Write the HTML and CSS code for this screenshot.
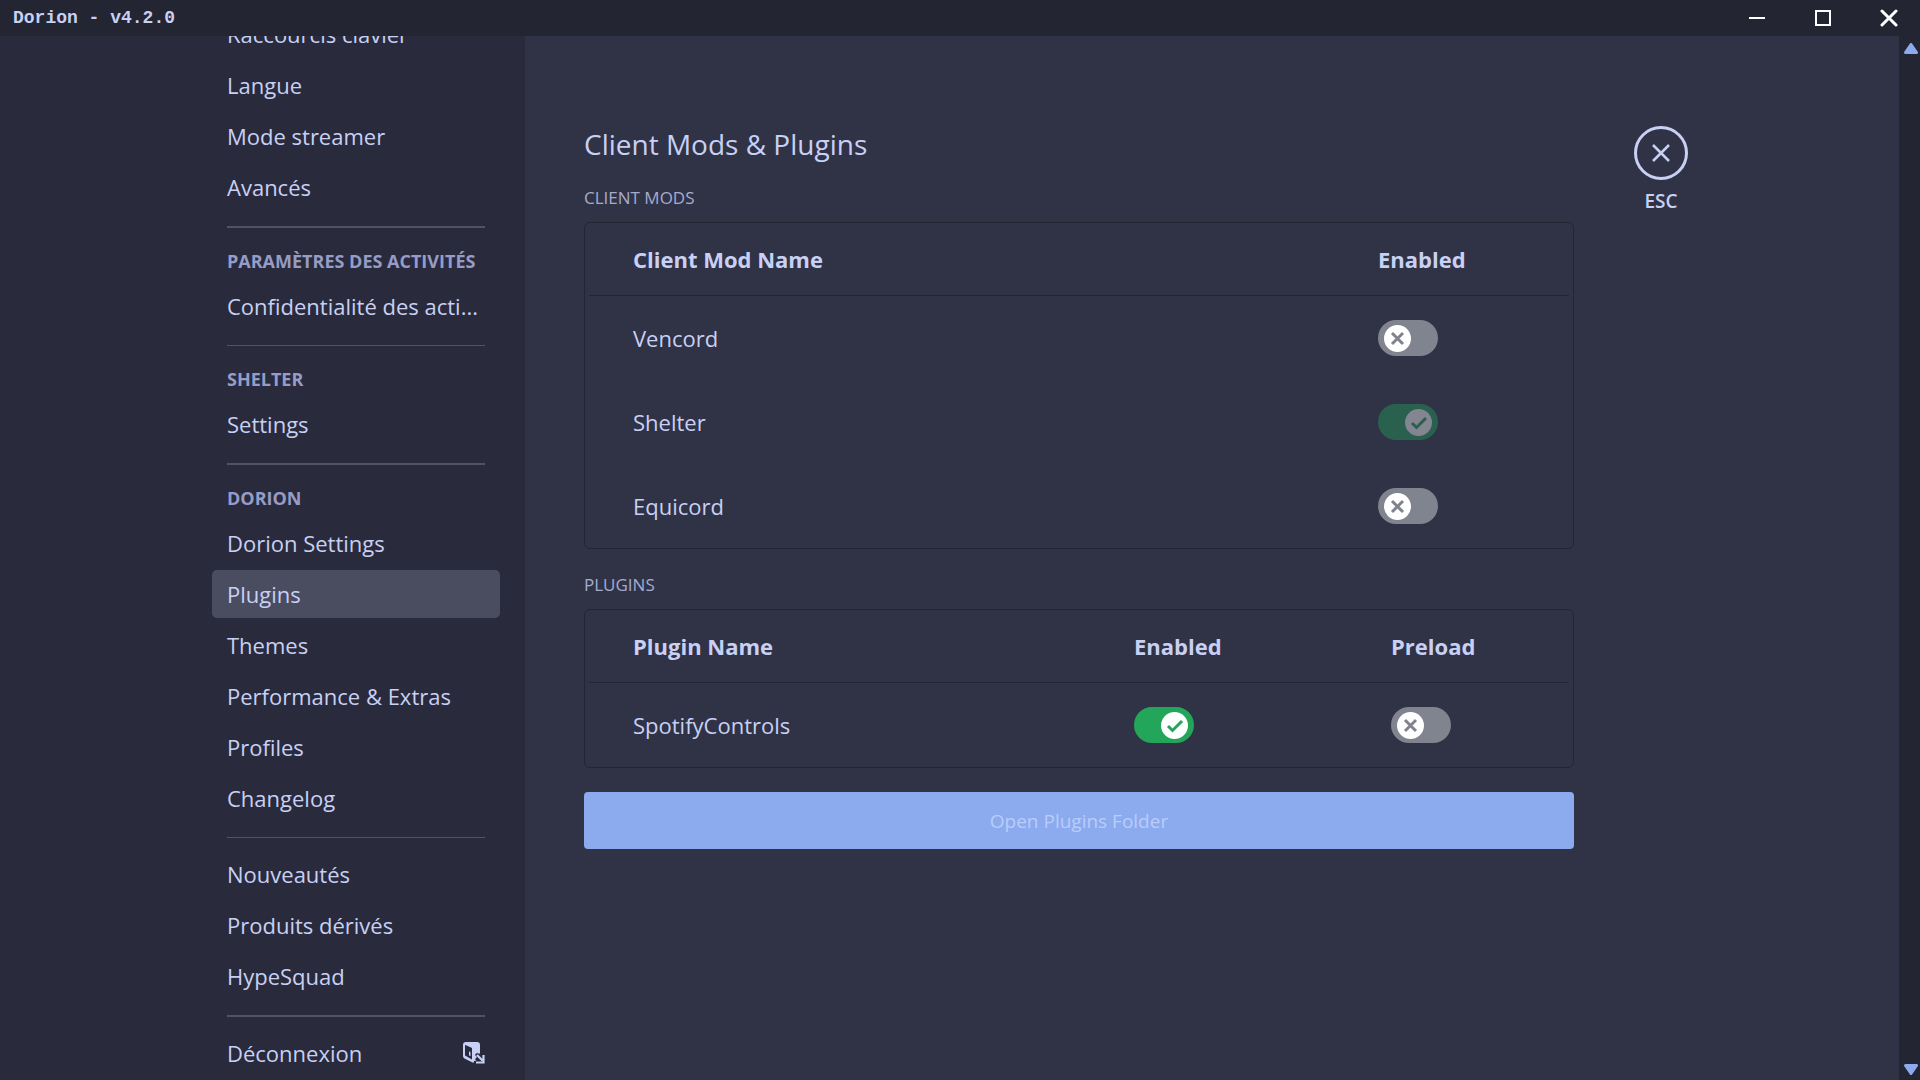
FILE: index.html
```html
<!DOCTYPE html>
<html lang="fr">
<head>
<meta charset="utf-8">
<meta name="viewport" content="width=device-width, initial-scale=1">
<title>Dorion - v4.2.0</title>
<link rel="stylesheet" href="styles.css">
</head>
<body>
<svg class="sprite" aria-hidden="true">
  <symbol id="knob-off" viewBox="0 0 27 27">
    <circle cx="13.5" cy="13.5" r="13.5" fill="#fff"/>
    <path d="M8 8l11 11M19 8L8 19" fill="none" stroke="currentColor" stroke-width="3"/>
  </symbol>
  <symbol id="knob-on" viewBox="0 0 27 27">
    <circle cx="13.5" cy="13.5" r="13.5" fill="#fff"/>
    <path d="M7 14l4.500 4.500L21 9" fill="none" stroke="currentColor" stroke-width="3"/>
  </symbol>
</svg>

<header class="titlebar">
  <span class="titlebar-name">Dorion - v4.2.0</span>
  <div class="window-controls">
    <button type="button" aria-label="Minimize"><svg width="18" height="18" viewBox="0 0 18 18"><path d="M1 9h16" stroke="currentColor" stroke-width="2"/></svg></button>
    <button type="button" aria-label="Maximize"><svg width="18" height="18" viewBox="0 0 18 18"><rect x="2" y="2" width="14" height="14" fill="none" stroke="currentColor" stroke-width="2"/></svg></button>
    <button type="button" aria-label="Close"><svg width="18" height="18" viewBox="0 0 18 18"><path d="M2 2l14 14M16 2L2 16" stroke="currentColor" stroke-width="3" stroke-linecap="round"/></svg></button>
  </div>
</header>

<div class="app">
  <aside class="sidebar">
    <nav class="nav">
      <a class="nav-item" href="#">Raccourcis clavier</a>
      <a class="nav-item" href="#">Langue</a>
      <a class="nav-item" href="#">Mode streamer</a>
      <a class="nav-item" href="#">Avancés</a>
      <hr class="nav-rule">
      <h2 class="nav-heading">Paramètres des activités</h2>
      <a class="nav-item" href="#">Confidentialité des acti...</a>
      <hr class="nav-rule thin">
      <h2 class="nav-heading">Shelter</h2>
      <a class="nav-item" href="#">Settings</a>
      <hr class="nav-rule">
      <h2 class="nav-heading">Dorion</h2>
      <a class="nav-item" href="#">Dorion Settings</a>
      <a class="nav-item selected" href="#" aria-current="page">Plugins</a>
      <a class="nav-item" href="#">Themes</a>
      <a class="nav-item" href="#">Performance &amp; Extras</a>
      <a class="nav-item" href="#">Profiles</a>
      <a class="nav-item" href="#">Changelog</a>
      <hr class="nav-rule thin">
      <a class="nav-item" href="#">Nouveautés</a>
      <a class="nav-item" href="#">Produits dérivés</a>
      <a class="nav-item" href="#">HypeSquad</a>
      <hr class="nav-rule">
      <a class="nav-item" href="#">Déconnexion
        <svg width="22" height="22" viewBox="0 0 22 22" fill="currentColor" aria-hidden="true">
          <path fill-rule="evenodd" d="M3 0h11q3 0 3 3v8.500h-2.500v-1q-2.500 1.500-2.500 2.500l2 2-1.500 1.500q-.5 1 .5 2.500h-2v.5q0 1.500-1.500 1L1.500 16.500Q0 15.500 0 14V3Q0 0 3 0zM2 3.500v10l7 4V6L2.500 3zM6 9.500l1.500.5v4L6 13.500z"/>
          <path d="M14 13l5.500 5.500M20.500 13v7.500H13" fill="none" stroke="currentColor" stroke-width="2.200"/>
        </svg>
      </a>
    </nav>
  </aside>

  <main class="main">
    <div class="content">
      <h1 class="title">Client Mods &amp; Plugins</h1>

      <h2 class="label">Client Mods</h2>
      <div class="card">
        <table class="list">
          <colgroup><col><col class="col-mod-enabled"></colgroup>
          <thead><tr><th scope="col">Client Mod Name</th><th scope="col">Enabled</th></tr></thead>
          <tbody>
            <tr><td><label for="vencord">Vencord</label></td><td><span class="toggle"><input type="checkbox" id="vencord"><svg><use href="#knob-off"/></svg></span></td></tr>
            <tr><td><label for="shelter">Shelter</label></td><td><span class="toggle on locked"><input type="checkbox" id="shelter" checked disabled><svg><use href="#knob-on"/></svg></span></td></tr>
            <tr><td><label for="equicord">Equicord</label></td><td><span class="toggle"><input type="checkbox" id="equicord"><svg><use href="#knob-off"/></svg></span></td></tr>
          </tbody>
        </table>
      </div>

      <h2 class="label">Plugins</h2>
      <div class="card">
        <table class="list">
          <colgroup><col><col class="col-enabled"><col class="col-preload"></colgroup>
          <thead><tr><th scope="col">Plugin Name</th><th scope="col">Enabled</th><th scope="col">Preload</th></tr></thead>
          <tbody>
            <tr><td><label for="spotify">SpotifyControls</label></td><td><span class="toggle on"><input type="checkbox" id="spotify" checked><svg><use href="#knob-on"/></svg></span></td><td><span class="toggle"><input type="checkbox" aria-label="Preload SpotifyControls"><svg><use href="#knob-off"/></svg></span></td></tr>
          </tbody>
        </table>
      </div>

      <button type="button" class="folder-button">Open Plugins Folder</button>
    </div>

    <button type="button" class="esc">
      <span class="esc-ring"><svg width="20" height="20" viewBox="0 0 20 20"><path d="M2 2l16 16M18 2L2 18" stroke="currentColor" stroke-width="2.500"/></svg></span>
      ESC
    </button>
  </main>

  <div class="scrollbar" aria-hidden="true">
    <svg width="14" height="11" viewBox="0 0 14 11"><path d="M7 1.500L12.500 9.500H1.500z" fill="currentColor" stroke="currentColor" stroke-width="3" stroke-linejoin="round"/></svg>
    <svg width="14" height="11" viewBox="0 0 14 11"><path d="M7 9.500L12.500 1.500H1.500z" fill="currentColor" stroke="currentColor" stroke-width="3" stroke-linejoin="round"/></svg>
  </div>
</div>
</body>
</html>
```
FILE: styles.css
```css
:root {
  --base: #303346;
  --mantle: #292b3c;
  --crust: #232533;
  --text: #c8d0f4;
  --subtext: #a5abcf;
  --heading: #979cc6;
  --blue: #8caaee;
}

* { box-sizing: border-box; }

body {
  margin: 0;
  height: 100vh;
  display: flex;
  flex-direction: column;
  overflow: hidden;
  background: var(--base);
  color: var(--text);
  font-family: "Open Sans", "Noto Sans", sans-serif;
  font-size: 22px;
  line-height: 28px;
}

button {
  margin: 0;
  padding: 0;
  border: 0;
  background: none;
  color: inherit;
  font: inherit;
}

h1, h2 { margin: 0; }

.sprite { display: none; }

/* Title bar */
.titlebar {
  flex: none;
  height: 36px;
  display: flex;
  align-items: center;
  justify-content: space-between;
  padding-left: 13px;
  background: var(--crust);
}

.titlebar-name {
  font: bold 18px/24px "Liberation Mono", monospace;
}

.window-controls {
  display: flex;
  gap: 4px;
  color: #fff;
}

.window-controls button {
  width: 62px;
  height: 36px;
  display: grid;
  place-items: center;
}

/* Layout */
.app {
  flex: 1;
  min-height: 0;
  display: grid;
  grid-template-columns: 525fr 1374fr 21px;
  grid-template-rows: 100%;
}

/* Sidebar */
.sidebar {
  display: flex;
  align-items: flex-end;
  justify-content: flex-end;
  padding-right: 25px;
  overflow: hidden;
  background: var(--mantle);
}

.nav {
  width: 288px;
  display: flex;
  flex-direction: column;
}

.nav-item {
  height: 48px;
  margin-bottom: 3px;
  padding: 0 15px;
  display: flex;
  align-items: center;
  justify-content: space-between;
  border-radius: 5px;
  color: inherit;
  font-weight: 500;
  text-decoration: none;
  white-space: nowrap;
}

.nav-item.selected { background: #4a4d60; }

.nav-rule {
  width: 258px;
  height: 2px;
  margin: 12px 15px;
  border: 0;
  background: #505266;
}

.nav-rule.thin { height: 1px; }

.nav-heading {
  height: 42px;
  padding: 0 15px;
  color: var(--heading);
  font-size: 18px;
  font-weight: 700;
  line-height: 42px;
  text-transform: uppercase;
  white-space: nowrap;
}

/* Main */
.main {
  display: flex;
  align-items: flex-start;
  gap: 60px;
  padding: 90px 60px 0 59px;
  overflow: hidden;
}

.content {
  flex: 1 1 auto;
  max-width: 990px;
}

.title {
  font-size: 28px;
  font-weight: 500;
  line-height: 36px;
}

.label {
  margin: 24px 0 12px;
  color: var(--subtext);
  font-size: 17px;
  font-weight: 400;
  line-height: 24px;
  text-transform: uppercase;
}

.card {
  padding: 0 4px;
  border: 1px solid var(--crust);
  border-radius: 6px;
}

.list {
  width: 100%;
  table-layout: fixed;
  border-collapse: separate;
  border-spacing: 0;
  text-align: left;
}

.col-mod-enabled { width: 235px; }
.col-enabled { width: 257px; }
.col-preload { width: 222px; }

.list th,
.list td {
  height: 84px;
  padding: 0 0 0 44px;
}

.list th {
  height: 73px;
  border-bottom: 1px solid var(--crust);
  font-weight: 700;
}

.toggle {
  position: relative;
  display: block;
  width: 60px;
  height: 36px;
  color: #80848e;
}

.toggle input {
  appearance: none;
  display: block;
  width: 100%;
  height: 100%;
  margin: 0;
  border-radius: 18px;
  color: inherit;
  background: currentColor;
}

.toggle svg {
  position: absolute;
  top: 5px;
  left: 6px;
  width: 27px;
  height: 27px;
  pointer-events: none;
}

.toggle.on { color: #23a55a; }
.toggle.on svg { left: 27px; }
.toggle.locked { opacity: 0.4; }

.folder-button {
  display: block;
  width: 100%;
  height: 57px;
  margin-top: 24px;
  border-radius: 4px;
  background: var(--blue);
  color: #b9cdfa;
  font-size: 19px;
  font-weight: 500;
}

.esc {
  display: flex;
  flex-direction: column;
  align-items: center;
  gap: 8px;
  font-size: 19px;
  font-weight: 600;
  line-height: 26px;
}

.esc-ring {
  width: 54px;
  height: 54px;
  display: grid;
  place-items: center;
  border: 3px solid currentColor;
  border-radius: 50%;
}

/* Scrollbar */
.scrollbar {
  display: flex;
  flex-direction: column;
  align-items: center;
  justify-content: space-between;
  padding: 7px 0 5px 2px;
  background: var(--crust);
  color: var(--blue);
}
```
